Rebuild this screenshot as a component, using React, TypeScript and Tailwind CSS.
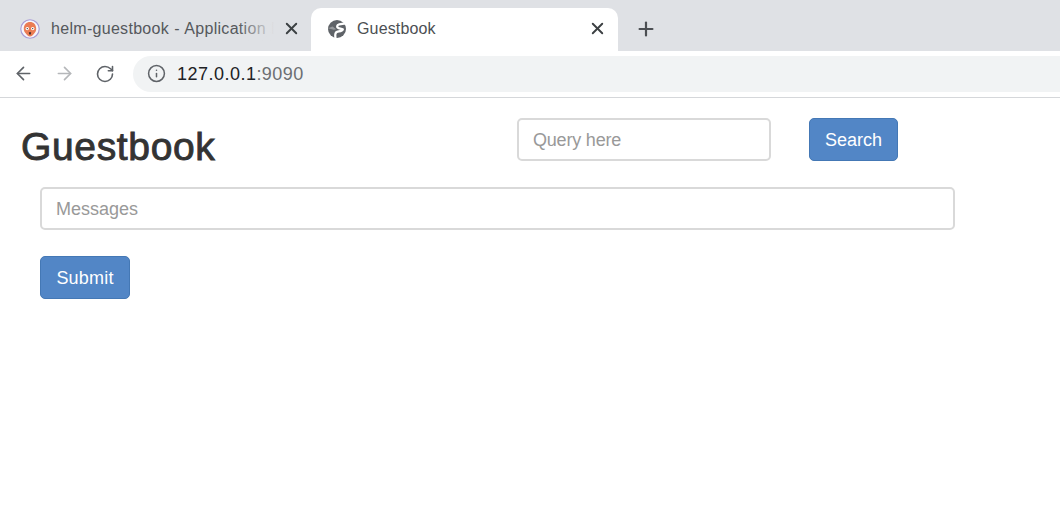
import { ArrowLeft, ArrowRight, Info, Plus, RotateCw, X } from "lucide-react";

function OwlFavicon() {
  return (
    <svg width="20" height="20" viewBox="0 0 20 20" className="shrink-0">
      <circle cx="10" cy="10" r="9.2" fill="#f7f5fb" stroke="#a79bd6" strokeWidth="1.1" />
      <path d="M3.800 9.800C3.800 5.600 6.500 3 10 3s6.200 2.600 6.200 6.800c0 2.200-.8 3.400-2 4.600-1 1-2.400 3.100-4.200 3.100s-3.200-2.100-4.200-3.100c-1.200-1.200-2-2.400-2-4.600Z" fill="#ea7c55" />
      <circle cx="7.300" cy="9.600" r="1.700" fill="#fff" />
      <circle cx="12.700" cy="9.600" r="1.700" fill="#fff" />
      <circle cx="7.300" cy="9.600" r="0.7" fill="#3a3a3a" />
      <circle cx="12.700" cy="9.600" r="0.7" fill="#3a3a3a" />
      <path d="M8.900 13.200h2.200l-.4 2.200H9.300Z" fill="#3a2a2a" />
    </svg>
  );
}

function GlobeIcon() {
  return (
    <svg width="20" height="20" viewBox="0 0 20 20" className="shrink-0">
      <circle cx="10" cy="10" r="9" fill="#5f6368" />
      <path
        d="M17 4.600 12.200 5.400C9.800 5.800 9.400 8.400 11.600 9.200L15.800 10.400C15.200 12.400 12.200 12.200 10 12.800 8.400 13.300 8 15.400 8.400 18.400"
        fill="none"
        stroke="#fff"
        strokeWidth="2.300"
        strokeLinecap="round"
        strokeLinejoin="round"
      />
      <path d="M1 9.200 5.500 7.600 9.200 10.200 6.800 10.800Z" fill="#fff" opacity="0.35" />
    </svg>
  );
}

export default function App() {
  return (
    <div className="h-[505px] w-[1060px] overflow-hidden bg-white font-['Liberation_Sans',Arial,sans-serif] text-[#333]">
      {/* tab strip */}
      <div className="flex h-[51px] bg-[#dfe1e5] pt-2">
        <div className="flex h-[43px] w-[311px] items-center pl-5 pr-[11px] pb-[2px]">
          <OwlFavicon />
          <span className="relative ml-[11px] w-[223px] overflow-hidden text-[16px] tracking-[0.3px] whitespace-nowrap text-[#55585c] [word-spacing:0.5px]">
            helm-guestbook - Application Details
            <span className="absolute inset-y-0 right-0 w-9 bg-gradient-to-r from-transparent to-[#dfe1e5]" />
          </span>
          <X size={19} strokeWidth={2.4} className="ml-auto translate-x-[1px] text-[#3c4043]" />
        </div>
        <div className="flex h-[43px] w-[307px] items-center rounded-t-[10px] bg-white pl-[16px] pr-[11px] pb-[2px]">
          <GlobeIcon />
          <span className="ml-[10px] text-[16px] tracking-[0.15px] text-[#4c4f53]">Guestbook</span>
          <X size={19} strokeWidth={2.4} className="ml-auto text-[#3c4043]" />
        </div>
        <div className="flex h-[43px] items-center pl-[17px] pb-[2px]">
          <Plus size={22} strokeWidth={2.4} className="text-[#4c4f53]" />
        </div>
      </div>

      {/* toolbar */}
      <div className="flex h-[47px] items-center border-b border-[#d5d7da] bg-white pb-[1px]">
        <div className="flex w-[133px] items-center pl-[13px]">
          <ArrowLeft size={21} strokeWidth={1.9} className="text-[#5f6368]" />
          <ArrowRight size={21} strokeWidth={1.9} className="ml-5 text-[#b5b7ba]" />
          <RotateCw size={20} strokeWidth={1.9} className="ml-[20px] text-[#5f6368]" />
        </div>
        <div className="flex h-[36px] flex-1 items-center rounded-l-[18px] bg-[#f1f3f4] pl-[14px]">
          <Info size={19} strokeWidth={1.9} className="text-[#5f6368]" />
          <span className="ml-[11px] translate-y-[1px] text-[18px] tracking-[0.48px] text-[#202124]">
            127.0.0.1<span className="text-[#6b6e72]">:9090</span>
          </span>
        </div>
      </div>

      {/* page */}
      <div className="flex h-[89px] items-start pl-[21px]">
        <h1 className="mt-[27px] w-[496px] text-[39px] leading-[43px] font-normal tracking-[0.65px] text-[#333] [-webkit-text-stroke:0.9px_#333]">
          Guestbook
        </h1>
        <input
          placeholder="Query here"
          className="mt-5 h-[43px] w-[254px] rounded-[5px] border-2 border-[#d9d9d9] px-[14px] pt-[1px] text-[18px] tracking-[-0.2px] text-[#333] outline-none placeholder:text-[#999]"
        />
        <button className="mt-5 ml-[38px] h-[43px] w-[89px] rounded-[5px] border border-[#4478b5] bg-[#5286c6] pt-[1px] text-[18px] text-white">
          Search
        </button>
      </div>
      <div className="pl-10">
        <input
          placeholder="Messages"
          className="block h-[43px] w-[915px] rounded-[5px] border-2 border-[#d9d9d9] px-[14px] pt-[1px] text-[18px] text-[#333] outline-none placeholder:text-[#999]"
        />
        <button className="mt-[26px] h-[43px] w-[90px] rounded-[5px] border border-[#4478b5] bg-[#5286c6] pt-[1px] text-[18px] tracking-[0.2px] text-white">
          Submit
        </button>
      </div>
    </div>
  );
}
